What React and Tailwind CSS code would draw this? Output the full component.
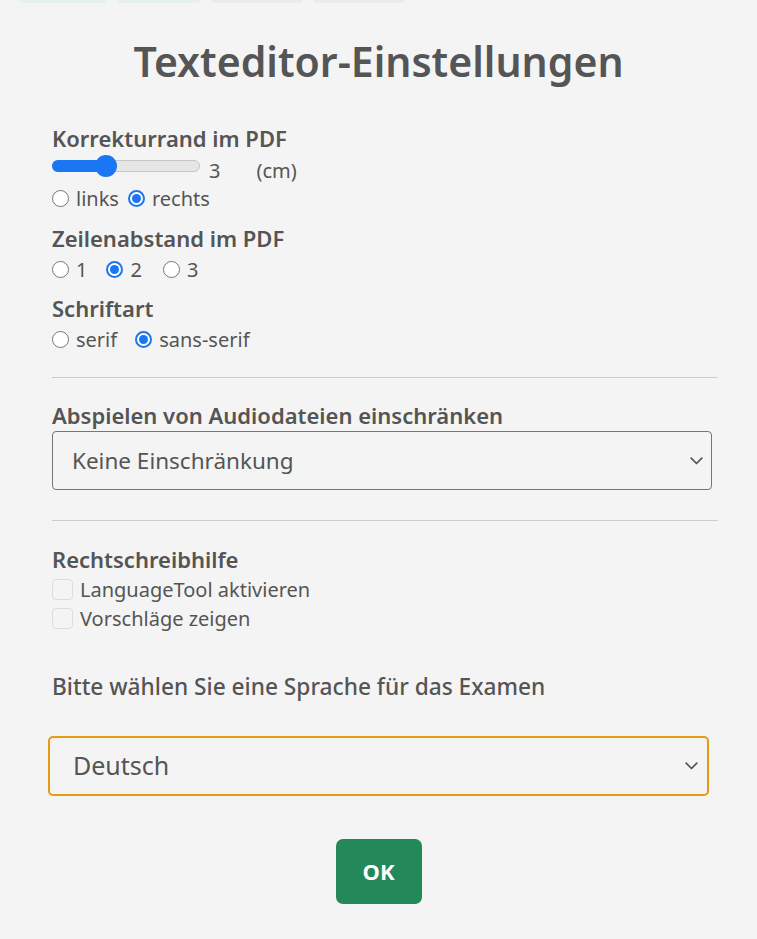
import React from "react";

function Radio({ checked }) {
  return checked ? (
    <span className="inline-flex h-[17px] w-[17px] shrink-0 items-center justify-center rounded-full border-[2px] border-[#1a76f2] bg-white">
      <span className="h-[9px] w-[9px] rounded-full bg-[#1a76f2]" />
    </span>
  ) : (
    <span className="inline-block h-[17px] w-[17px] shrink-0 rounded-full border border-[#767676] bg-white" />
  );
}

function RadioItem({ checked, label, className = "" }) {
  return (
    <span className={"inline-flex items-center " + className}>
      <Radio checked={checked} />
      <span className="ml-[7px] leading-[29px]">{label}</span>
    </span>
  );
}

function Chevron() {
  return (
    <svg width="13" height="8" viewBox="0 0 13 8" fill="none">
      <path d="M1.2 1.2 L6.5 6.5 L11.8 1.2" stroke="#555" strokeWidth="1.7" strokeLinecap="round" strokeLinejoin="round" />
    </svg>
  );
}

function Checkbox({ label }) {
  return (
    <div className="flex h-[29px] items-center">
      <span className="h-[21px] w-[21px] shrink-0 rounded-[4px] border border-[#dcdcdc] bg-[#f4f4f4]" />
      <span className="ml-[7px] leading-[29px]">{label}</span>
    </div>
  );
}

export default function App() {
  return (
    <div className="min-h-[939px] w-[757px] bg-[#f4f4f4] font-['Noto_Sans',sans-serif] text-[20px] text-[#555555]">
      <div className="flex h-[3px] gap-[12px] pl-[20px]">
        <div className="h-[3px] w-[86px] rounded-b bg-[#e6f0ef]" />
        <div className="h-[3px] w-[82px] rounded-b bg-[#e6f0ef]" />
        <div className="h-[3px] w-[90px] rounded-b bg-[#ebebeb]" />
        <div className="h-[3px] w-[90px] rounded-b bg-[#ebebeb]" />
      </div>

      <h1 className="mt-[28px] text-center text-[41px] font-semibold leading-[60px] text-[#555555]">
        Texteditor-Einstellungen
      </h1>

      <div className="px-[52px]">
        <div className="mb-[4px] mt-[34px] text-[22px] font-semibold leading-[26px]">Korrekturrand im PDF</div>
        <div className="flex h-[29px] items-start">
          <div className="relative h-[22px] w-[148px]">
            <div className="absolute left-0 right-0 top-[5px] h-[12px] rounded-full border border-[#c6c6c6] bg-[#e6e6e6]" />
            <div className="absolute left-0 top-[5px] h-[12px] w-[60px] rounded-full bg-[#1a76f2]" />
            <div className="absolute left-[43px] top-0 h-[22px] w-[22px] rounded-full bg-[#1a76f2]" />
          </div>
          <span className="ml-[9px] mt-[1px] leading-[30px]">3</span>
          <span className="ml-[36px] mt-[1px] leading-[30px]">(cm)</span>
        </div>
        <div className="flex items-center">
          <RadioItem checked={false} label="links" />
          <RadioItem checked={true} label="rechts" className="ml-[9px]" />
        </div>

        <div className="mb-[4px] mt-[12px] text-[22px] font-semibold leading-[26px]">Zeilenabstand im PDF</div>
        <div className="flex items-center">
          <RadioItem checked={false} label="1" />
          <RadioItem checked={true} label="2" className="ml-[19px]" />
          <RadioItem checked={false} label="3" className="ml-[21px]" />
        </div>

        <div className="mb-[4px] mt-[11px] text-[22px] font-semibold leading-[26px]">Schriftart</div>
        <div className="flex items-center">
          <RadioItem checked={false} label="serif" />
          <RadioItem checked={true} label="sans-serif" className="ml-[18px]" />
        </div>

        <div className="mt-[23px] h-px w-[666px] bg-[#cccccc]" />

        <div className="mb-[4px] mt-[25px] text-[22px] font-semibold leading-[24px]">Abspielen von Audiodateien einschränken</div>
        <div className="flex h-[59px] w-[660px] items-center justify-between rounded-[4px] border border-[#767676] pl-[19px] pr-[8px]">
          <span className="text-[22.5px]">Keine Einschränkung</span>
          <Chevron />
        </div>

        <div className="mt-[30px] h-px w-[666px] bg-[#cccccc]" />

        <div className="mb-[2px] mt-[24px] text-[22px] font-semibold leading-[28px]">Rechtschreibhilfe</div>
        <Checkbox label="LanguageTool aktivieren" />
        <Checkbox label="Vorschläge zeigen" />

        <div className="mt-[39px] text-[22.7px] font-medium leading-[30px]">Bitte wählen Sie eine Sprache für das Examen</div>
      </div>

      <div className="pl-[48px]">
        <div className="mt-[34px] flex h-[60px] w-[661px] items-center justify-between rounded-[5px] border-2 border-[#e59b12] pl-[23px] pr-[9px]">
          <span className="text-[25px]">Deutsch</span>
          <Chevron />
        </div>
      </div>

      <div className="mt-[43px] flex justify-center">
        <button className="flex h-[65px] w-[86px] items-center justify-center rounded-[7px] bg-[#23885a] text-[22px] font-bold text-white">
          OK
        </button>
      </div>
    </div>
  );
}
